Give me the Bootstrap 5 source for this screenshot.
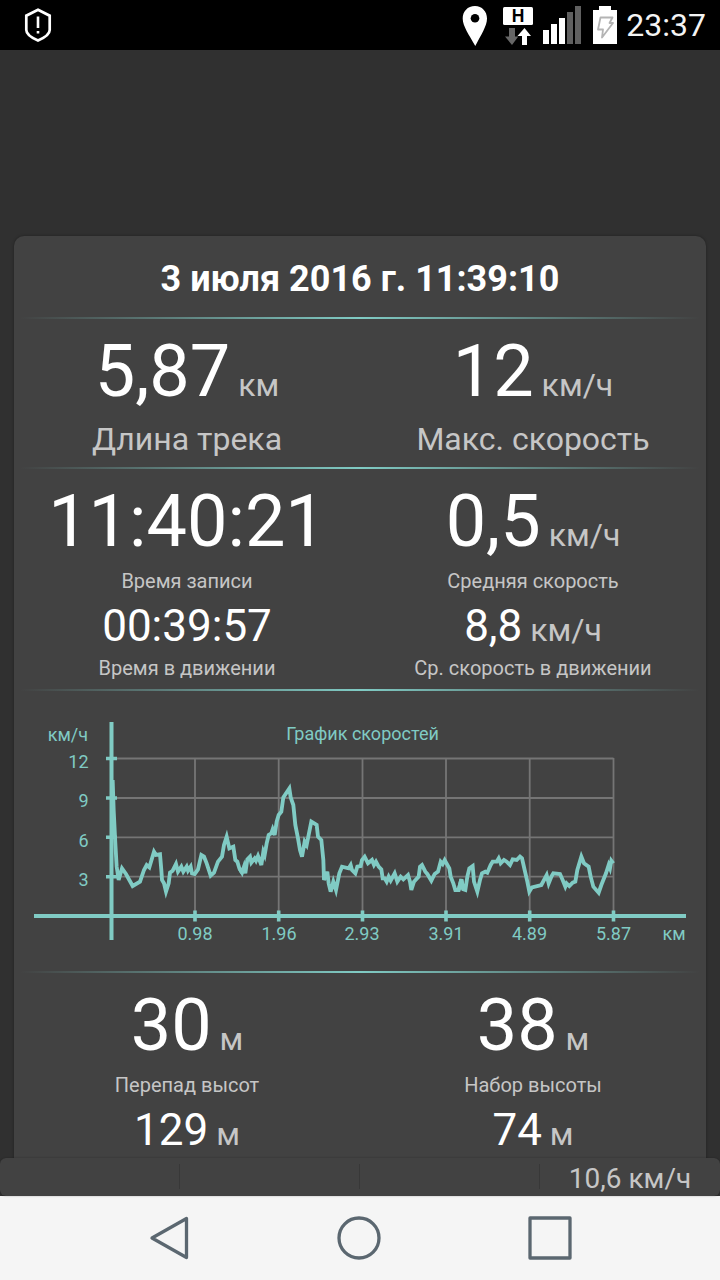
<!DOCTYPE html>
<html lang="ru">
<head>
<meta charset="utf-8">
<meta name="viewport" content="width=device-width, initial-scale=1">
<title>Статистика трека</title>
<link href="https://cdn.jsdelivr.net/npm/bootstrap@5.3.0/dist/css/bootstrap.min.css" rel="stylesheet">
<style>
  body { font-family: Roboto, "Noto Sans", sans-serif; background: #303030; color: #fff; width: 720px; height: 1280px; letter-spacing: 0; }
  svg { display: block; flex: none; }
  .statusbar { height: 50px; background: #000; padding: 0 14px 0 24px; }
  .clock { font-size: 32px; line-height: 52px; color: #f4f4f4; }
  .track { margin: 186px 14px 0; background: #424242; border-radius: 10px 10px 0 0; box-shadow: 0 0 3px rgba(0,0,0,.35); }
  .viewport { height: 1108px; }
  .track-title { font-size: 36px; font-weight: 700; line-height: 86px; height: 81px; }
  .rule { height: 2px; margin: 0 6px; background: linear-gradient(90deg, rgba(128,203,196,0), #80cbc4 50%, rgba(128,203,196,0)); }
  .v-big { font-size: 72px; line-height: 84px; margin: 11px 0 -1px; white-space: nowrap; }
  .v-mid { font-size: 44px; line-height: 50px; margin-top: 8px; white-space: nowrap; }
  .unit { font-size: 32px; line-height: 1; color: #c6c6c6; white-space: pre; }
  .l-big { font-size: 32px; line-height: 36px; padding: 8px 0 10px; color: #c6c6c6; }
  .l-small { font-size: 20px; line-height: 24px; padding-top: 6px; color: #c6c6c6; }
  .v-mid + .l-small { padding: 5px 0 9px; }
  .speedbar { height: 38px; background: #424242; border-radius: 6px; box-shadow: 0 0 2px rgba(0,0,0,.3); font-size: 28px; line-height: 41px; color: #c6c6c6; z-index: 1; }
  .speedbar .cell:not(:last-child) { background: linear-gradient(#383838, #383838) right 6px / 1px 25px no-repeat; }
  .softkeys { height: 84px; background: #f5f5f5; }
</style>
</head>
<body class="d-flex flex-column overflow-hidden">
<header class="statusbar d-flex align-items-center flex-shrink-0">
  <svg width="28" height="50" viewBox="24 0 28 50" fill="none" stroke="#fff" stroke-width="2.7"><path d="M38 9.8 49.7 15.7V30Q49.7 35.5 38 40.5 26.3 35.5 26.3 30V15.7Z"/><path d="M38 16.500v11.500M38 31v2.500" stroke-width="2.6"/></svg>
  <svg class="ms-auto" width="166" height="50" viewBox="460 0 166 50">
    <path d="M475 6C467.500 6 462.700 11.500 462.700 18.500C462.700 26 469 35 475.300 46C481 35 487 26 487 18.500C487 11.500 482 6 475 6Z" fill="#fff"/><circle cx="475" cy="18.200" r="4.300"/>
    <rect x="503" y="7" width="30" height="18" rx="1.500" fill="#fff"/>
    <text x="518" y="22" text-anchor="middle" font-size="17.500" font-weight="700" font-family="Liberation Sans, sans-serif">H</text>
    <path d="M509 28h6v8.500h3.300L512 45l-7-8.500h4Z" fill="#666"/>
    <path d="M522 45h5v-9h4l-6.500-8-7 8h4.500Z" fill="#fff"/>
    <path d="M543 30h6v14h-6zM551 24h6v20h-6zM559 18h6v26h-6z" fill="#fff"/>
    <path d="M567 12h6v32h-6zM575 6h6v38h-6z" fill="#606060"/>
    <path d="M599 6h12v4h6v34h-24V10h6z" fill="#fff"/>
    <path d="M600.500 17.500H612.500L609.500 23H613L602 37.500L603 29.500H598Z" fill="none" stroke="#b4b4b4" stroke-width="1.800" stroke-linejoin="round"/>
  </svg>
  <span class="clock">23:37</span>
</header>

<main class="viewport flex-shrink-0 overflow-hidden">
  <section class="track text-center">
    <div class="track-title">3 июля 2016 г. 11:39:10</div>
    <div class="rule"></div>
    <div class="row g-0">
      <div class="col-6"><div class="v-big">5,87<span class="unit"> км</span></div><div class="l-big">Длина трека</div></div>
      <div class="col-6"><div class="v-big">12<span class="unit"> км/ч</span></div><div class="l-big">Макс. скорость</div></div>
    </div>
    <div class="rule"></div>
    <div class="row g-0">
      <div class="col-6">
        <div class="v-big">11:40:21</div><div class="l-small">Время записи</div>
        <div class="v-mid">00:39:57</div><div class="l-small">Время в движении</div>
      </div>
      <div class="col-6">
        <div class="v-big">0,5<span class="unit"> км/ч</span></div><div class="l-small">Средняя скорость</div>
        <div class="v-mid">8,8<span class="unit"> км/ч</span></div><div class="l-small">Ср. скорость в движении</div>
      </div>
    </div>
    <div class="rule"></div>
    <svg width="692" height="280" viewBox="14 691 692 280">
      <path d="M111 758.500H613.500M111 798H613.500M111 837.300H613.500M111 876.700H613.500M195 758V916M278.700 758V916M362.500 758V916M446 758V916M529.700 758V916M613.500 758V916" stroke="#fff" stroke-opacity=".27" stroke-width="1.800" fill="none"/>
      <path d="M34 916H686M111.500 722V940" stroke="#80cbc4" stroke-width="4" fill="none"/>
      <path d="M106 758.500h11M106 798h11M106 837.300h11M106 876.700h11M195 910.500v11M278.700 910.500v11M362.500 910.500v11M446 910.500v11M529.700 910.500v11M613.500 910.500v11" stroke="#80cbc4" stroke-width="3.600" fill="none"/>
      <g transform="translate(20 710) scale(.33333)" fill="none" stroke="#80cbc4" stroke-width="11.500">
        <polyline points="278,210 281,300 286,400 290,470 296,510 306,475 318,492 338,528 360,515 372,480 380,465 388,472 402,425 408,435 420,433 424,480 426,510 432,520 438,545 446,520 450,488 458,482 468,462 474,485 484,470 490,485 500,470 504,482 512,470 516,490 524,492 534,478 544,435 552,440 560,460 572,497 582,488 594,455 606,440 612,405 620,380 628,415 640,410 646,450 652,455 658,475 666,488"/>
        <polyline transform="translate(660 0)" points="-2,475 6,488 12,470 16,490 22,448 30,440 34,458 44,445 48,452 54,438 64,465 70,425 74,435 80,400 86,375 94,370 98,358 104,375 110,335 116,315 124,305 130,262 148,235 152,262 160,285 166,345 174,385 180,420 186,440 194,395 200,405 206,375 214,335 230,345 234,380 244,390 250,450 252,510 262,485 266,520 272,545 280,515 288,540 298,490 306,470 326,475 332,465 336,480 346,490 352,470 362,468 366,450 374,440 384,460 396,450 402,465 408,455 416,470 424,478 428,505 434,505 440,515 446,500 452,512 464,490 472,515 482,500 490,508 504,495 510,515 514,540 522,515 536,500 540,470 546,465 556,485 562,492 574,512 584,492 594,485 602,455 608,462 614,450 628,475 632,500 640,520 646,540 656,540 664,508 670,540"/>
        <polyline transform="translate(1320 0)" points="-4,540 4,508 10,538 16,540 22,500 28,475 38,468 42,515 52,545 60,510 66,490 76,485 82,488 92,465 98,455 110,455 116,445 122,460 132,450 140,455 150,465 158,448 170,450 180,440 186,445 194,480 202,515 208,545 216,532 244,525 260,495 266,520 274,500 280,490 300,492 308,510 316,530 320,520 328,528 338,518 346,515 352,480 364,440 372,460 386,470 392,500 400,530 416,548 424,525 438,490 446,465 450,475 454,452 460,460"/>
      </g>
      <g fill="#80cbc4" font-size="18">
        <g text-anchor="end"><text x="88" y="740.500">км/ч</text><text x="88.500" y="767.500">12</text><text x="88.500" y="807">9</text><text x="88.500" y="846.500">6</text><text x="88.500" y="886">3</text><text x="685.500" y="940">км</text></g>
        <g text-anchor="middle"><text x="362.500" y="740">График скоростей</text><text x="195" y="940">0.98</text><text x="279" y="940">1.96</text><text x="362" y="940">2.93</text><text x="446" y="940">3.91</text><text x="529.500" y="940">4.89</text><text x="613.500" y="940">5.87</text></g>
      </g>
    </svg>
    <div class="rule"></div>
    <div class="row g-0">
      <div class="col-6">
        <div class="v-big">30<span class="unit"> м</span></div><div class="l-small">Перепад высот</div>
        <div class="v-mid">129<span class="unit"> м</span></div>
      </div>
      <div class="col-6">
        <div class="v-big">38<span class="unit"> м</span></div><div class="l-small">Набор высоты</div>
        <div class="v-mid">74<span class="unit"> м</span></div>
      </div>
    </div>
    <div class="pb-3"></div>
  </section>
</main>

<div class="speedbar row g-0 flex-shrink-0 position-relative text-center">
  <div class="col-3 cell"></div><div class="col-3 cell"></div><div class="col-3 cell"></div><div class="col-3 cell">10,6 км/ч</div>
</div>
<nav class="softkeys flex-shrink-0">
  <svg width="720" height="84" viewBox="0 1196 720 84" fill="none" stroke="#5b6770" stroke-width="3.300" stroke-linejoin="round">
    <path d="M186.500 1218.500V1257.500L152 1238Z"/><circle cx="359" cy="1238" r="20"/><rect x="530" y="1218" width="40" height="40"/>
  </svg>
</nav>
</body>
</html>
